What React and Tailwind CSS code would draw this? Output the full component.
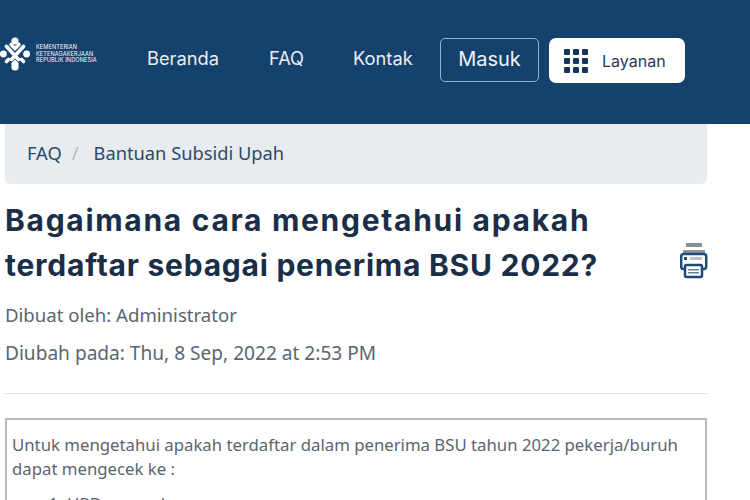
import React from 'react';

const Logo = () => (
    <svg width="30" height="34" viewBox="0 0 30 34" fill="white">
        <circle cx="15" cy="4" r="3.6" />
        <circle cx="15" cy="30" r="3.6" />
        <circle cx="3.4" cy="17" r="3.4" />
        <circle cx="26.6" cy="17" r="3.4" />
        <g stroke="white" strokeWidth="3.6" strokeLinecap="round" fill="none">
            <path d="M6.5 9.5l12 13" />
            <path d="M23.5 9.5l-12 13" />
            <path d="M11 7.5l4 4 4-4" />
            <path d="M6.5 24.5l2-2" />
            <path d="M23.5 24.5l-2-2" />
            <path d="M13 27l2-2 2 2" />
        </g>
    </svg>
);

const GridIcon = () => (
    <div className="grid grid-cols-3 gap-[3px]">
        {[...Array(9)].map((_, i) => (
            <span key={i} className="w-[6px] h-[6px] rounded-[1px] bg-[#12365c]" />
        ))}
    </div>
);

const PrintIcon = () => (
    <svg width="28" height="36" viewBox="0 0 28 36">
        <rect x="6" y="0" width="16" height="4" fill="#8a8f96" />
        <rect x="3" y="7" width="22" height="5" fill="#8f99a6" />
        <rect x="1.2" y="11" width="25" height="15" rx="2.5" fill="#ffffff" stroke="#1f4a78" strokeWidth="2.5" />
        <rect x="4" y="14" width="3" height="3" fill="#1f4a78" />
        <rect x="10" y="14" width="12" height="3" fill="#b9c2cc" />
        <rect x="5" y="22" width="17" height="12" rx="1.5" fill="#ffffff" stroke="#1f4a78" strokeWidth="2.5" />
        <rect x="8" y="26" width="11" height="1.5" fill="#6d8197" />
        <rect x="8" y="29" width="11" height="1.5" fill="#6d8197" />
    </svg>
);

export default function App() {
    return (
        <div className="w-[750px] h-[500px] overflow-hidden bg-white font-['Noto_Sans',sans-serif]">
            <header className="h-[124px] bg-[#15416d] flex items-start pt-[37px]">
                <div className="w-[147px] flex items-center gap-[6px]">
                    <Logo />
                    <div className="text-[5.6px] leading-[6.6px] text-white font-['Inter',sans-serif] tracking-[0.1px]">
                        <div>KEMENTERIAN</div>
                        <div>KETENAGAKERJAAN</div>
                        <div>REPUBLIK INDONESIA</div>
                    </div>
                </div>
                <nav className="flex items-center h-[44px] text-[18.3px] text-[#e8eef4] font-['Inter',sans-serif]">
                    <a className="w-[122px]">Beranda</a>
                    <a className="w-[84px]">FAQ</a>
                    <a className="w-[87px]">Kontak</a>
                </nav>
                <button className="mt-[1px] w-[99px] h-[44px] border border-[#8db3d6] rounded-[5px] pb-[2px] text-[20px] text-[#eef4f9] font-['Inter',sans-serif]">
                    Masuk
                </button>
                <button className="mt-[1px] ml-[10px] w-[136px] h-[45px] bg-white rounded-[7px] flex items-center pl-[15px] gap-[14px] text-[16px] text-[#1f3a56] font-['Inter',sans-serif]">
                    <GridIcon />
                    <span>Layanan</span>
                </button>
            </header>

            <main className="px-[5px]">
                <div className="h-[60px] w-[702px] bg-[#e9ecef] rounded-b-[6px] flex items-center pb-[3px] pl-[22px] text-[18.3px] text-[#2b4a6b]">
                    <span>FAQ</span>
                    <span className="ml-[10px] mr-[15px] text-[#b4bac1]">/</span>
                    <span>Bantuan Subsidi Upah</span>
                </div>

                <div className="flex items-start justify-between w-[703px] mt-[14px]">
                    <h1 className="text-[30px] leading-[45px] font-bold text-[#1a2f47] font-['Inter',sans-serif]">
                        <span className="tracking-[1.7px]">Bagaimana cara mengetahui apakah</span>
                        <br />
                        <span className="tracking-[0.75px]">terdaftar sebagai penerima BSU 2022?</span>
                    </h1>
                    <div className="mt-[45px] shrink-0">
                        <PrintIcon />
                    </div>
                </div>

                <p className="mt-[8px] text-[18.6px] leading-[37px] text-[#5a6570]">Dibuat oleh: Administrator</p>
                <p className="mt-[2px] text-[19.1px] leading-[37px] text-[#5a6570]">Diubah pada: Thu, 8 Sep, 2022 at 2:53 PM</p>

                <hr className="mt-[21px] w-[702px] border-t border-[#dfe2e5]" />

                <div className="mt-[24px] w-[702px] h-[120px] border-2 border-[#b9b9b9] pl-[5px] pr-[6px] pt-[13px] text-[16.75px] leading-[24px] text-[#5a6570]">
                    <p>Untuk mengetahui apakah terdaftar dalam penerima BSU tahun 2022 pekerja/buruh dapat mengecek ke :</p>
                    <ol className="mt-[11px] pl-[55px] list-decimal">
                        <li>HRD perusahaan</li>
                    </ol>
                </div>
            </main>
        </div>
    );
}
